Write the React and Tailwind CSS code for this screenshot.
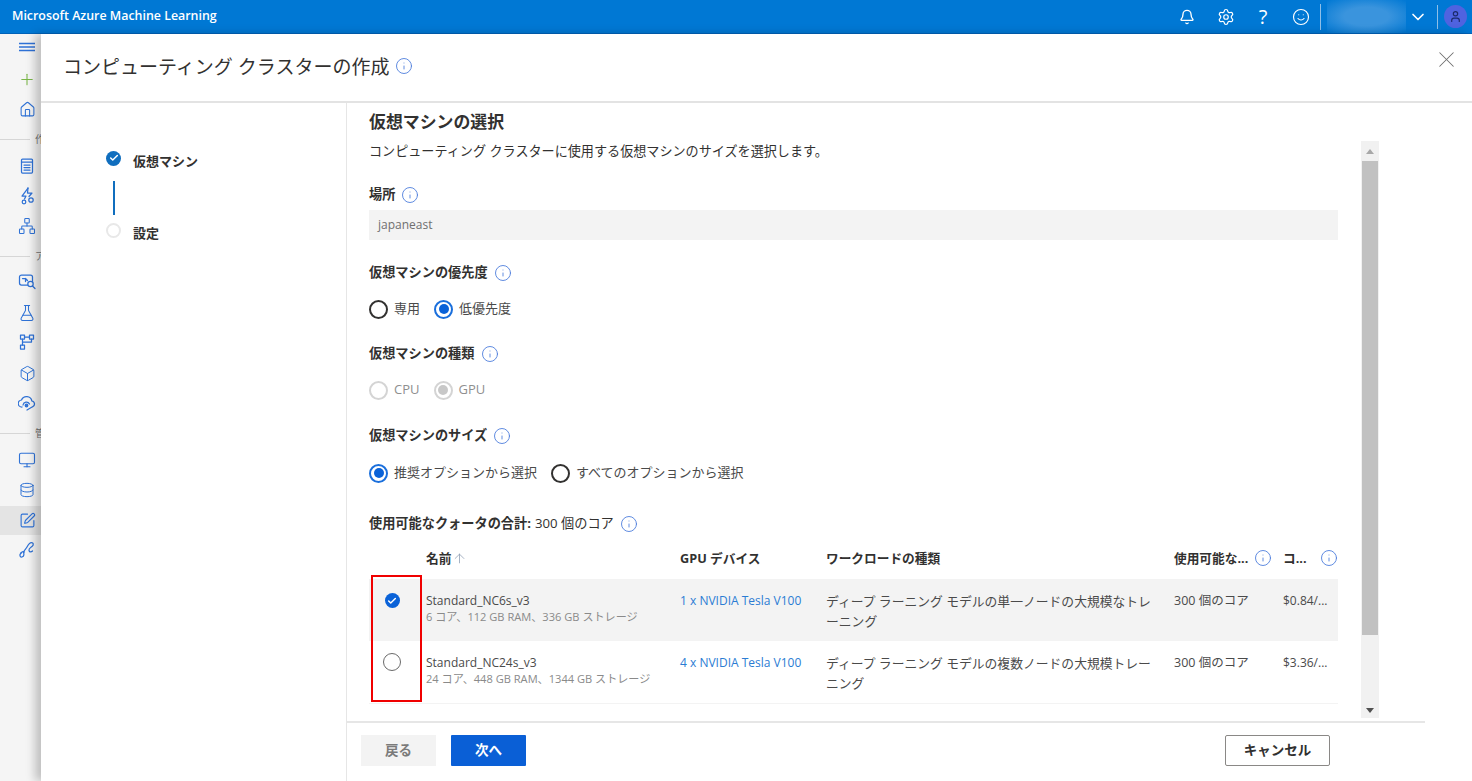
import React from "react";
import { Bell, Settings, Smile, ChevronDown, User, Home, Info, Check, X, Network, FlaskConical, Box, Monitor, Database, SquarePen, ArrowUp, Plus } from "lucide-react";

const FONT = "font-['Open_Sans','Noto_Sans_CJK_JP',sans-serif]";
const BLUE = "text-[#2f72d6]";

const Ico = ({ children }) => (
  <svg width="18" height="18" viewBox="0 0 18 18" fill="none" stroke="#2f72d6" strokeWidth="1.25" strokeLinecap="round" strokeLinejoin="round">
    {children}
  </svg>
);

const Burger = () => (
  <svg width="18" height="18" viewBox="0 0 18 18" stroke="#2f72d6" strokeWidth="1.3">
    <path d="M1 5.500h16M1 9h16M1 12.500h16" />
  </svg>
);
const Notebook = () => (
  <Ico>
    <rect x="3.500" y="2" width="11" height="14" rx="1" />
    <path d="M3.500 5h11M6 8h6M6 10.500h6M6 13h6" />
  </Ico>
);
const AutoMl = () => (
  <Ico>
    <path d="M10 1 4 9h4l-1.500 3" />
    <path d="M10 1 9.500 6H14l-3 3.500" />
    <circle cx="6" cy="15" r="1.800" />
    <circle cx="13" cy="13" r="2.200" />
  </Ico>
);
const Experiments = () => (
  <Ico>
    <rect x="1.500" y="2" width="13" height="10" rx="2" />
    <path d="M4.500 5.500h3v3M7.500 5.500l2 2" />
    <circle cx="12.500" cy="11" r="2.700" fill="#f5f5f5" />
    <path d="m14.500 13 2.500 2.500" />
  </Ico>
);
const Pipeline = () => (
  <Ico>
    <rect x="2.500" y="2" width="4" height="4" />
    <rect x="11.500" y="2" width="4" height="4" />
    <rect x="2.500" y="12" width="4" height="4" />
    <path d="M6.500 4h5M4.500 6v6M13.500 6v3H4.500" />
  </Ico>
);
const Endpoint = () => (
  <Ico>
    <path d="M4 13a3.500 3.500 0 0 1-.5-7 5.500 5.500 0 0 1 10.400 1 3 3 0 0 1 .6 5.800L9 16" />
    <path d="M5 11a3.500 3.500 0 0 1 6.500-1" />
    <circle cx="8.500" cy="11.500" r="1.300" fill="#2f72d6" />
  </Ico>
);
const Linked = () => (
  <Ico>
    <path d="M3 12c-2 2-1 4.500 1 4 2.500-.6 2-3.500 1.500-4.500S8 8 9 6s2.500-4.500 4.500-4.500S16 4 14 5.500s-3.500 2-3 4 2.500 1.500 3.500.5" />
    <path d="M3 12c1-1 2.500-1.500 3.500-1" />
  </Ico>
);

const Nav = ({ children, h = 30, active }) => (
  <div className={`flex items-center pl-[18px] ${active ? "bg-[#e4e4e4]" : ""}`} style={{ height: h }}>
    <div className="flex w-[18px] shrink-0 justify-center">{children}</div>
  </div>
);
const Sep = ({ label }) => (
  <div className="flex h-[26px] items-center gap-[5px] overflow-hidden">
    <div className="h-px w-[30px] shrink-0 bg-[#d6d6d6]" />
    <span className="whitespace-nowrap text-[10px] text-[#777]">{label}</span>
  </div>
);

const InfoI = ({ className = "" }) => (
  <Info size={18} strokeWidth={1.2} className={`shrink-0 text-[#4f7fdc] ${className}`} />
);

const Label = ({ children }) => (
  <div className="flex h-5 items-center text-[13.200px] font-bold text-[#323130]">
    {children}
    <InfoI className="ml-[6px]" />
  </div>
);

const Radio = ({ on, disabled, label }) => (
  <div className="flex items-center gap-[6px]">
    <span
      className={`flex h-[19px] w-[19px] items-center justify-center rounded-full border-2 ${
        disabled ? "border-[#d4d4d4]" : on ? "border-[#1a6fdc]" : "border-[#323130]"
      }`}
    >
      {on && <span className={`h-[10px] w-[10px] rounded-full ${disabled ? "bg-[#c8c8c8]" : "bg-[#0a62d8]"}`} />}
    </span>
    <span className={`text-[13px] ${disabled ? "text-[#8f8f8f]" : "text-[#4a4a4a]"}`}>{label}</span>
  </div>
);

const Cols = "grid grid-cols-[57px_254px_146px_348px_109px_55px]";

const Row = ({ sel, name, spec, gpu, work, price }) => (
  <div className={`${Cols} h-[62px] text-[12px] leading-[20px] text-[#4a4a4a] ${sel ? "bg-[#f3f3f3]" : ""}`}>
    <div className="flex justify-center pr-[11px] pt-[14px]">
      {sel ? (
        <span className="flex h-[15px] w-[15px] items-center justify-center rounded-full bg-[#0a62d8]">
          <Check size={10} strokeWidth={3.500} className="text-white" />
        </span>
      ) : (
        <span className="-mt-[2px] h-[18px] w-[18px] rounded-full border-[1.500px] border-[#6a6a6a]" />
      )}
    </div>
    <div className="pt-[12px]">
      <div>{name}</div>
      <div className="-mt-[4px] text-[11.100px] text-[#8a8a8a]">{spec}</div>
    </div>
    <div className="pt-[12px] text-[#2b7cd3]">{gpu}</div>
    <div className="pr-[18px] pt-[12px] text-[12.800px]">{work}</div>
    <div className="pt-[12px] text-[12.500px]">300 個のコア</div>
    <div className="pt-[12px]">{price}</div>
  </div>
);

export default function App() {
  return (
    <div className={`${FONT} flex h-[781px] w-[1472px] flex-col overflow-hidden bg-white`}>
      <header className="flex h-[34px] shrink-0 items-center border-b border-[#0062b8] bg-[#0078d4] text-white">
        <div className="ml-3 text-[12.400px] font-semibold">Microsoft Azure Machine Learning</div>
        <div className="ml-auto flex h-full items-center">
          <Bell size={16} strokeWidth={2} className="mr-[22px]" />
          <Settings size={18} strokeWidth={1.6} className="mr-[22px]" />
          <span className="mr-[23px] w-[12px] text-center text-[20px] leading-none">?</span>
          <Smile size={18} strokeWidth={1.5} className="mr-[10px]" />
          <div className="h-[26px] w-px bg-[#8fbfe8]" />
          <div className="ml-[6px] h-full w-[79px] bg-[radial-gradient(ellipse_at_center,#3a94dd_40%,#0078d4_100%)]" />
          <ChevronDown size={20} strokeWidth={2} className="ml-[2px] mr-[9px]" />
          <div className="h-[24px] w-px bg-[#8fbfe8]" />
          <div className="ml-[6px] mr-[5px] flex h-[23px] w-[23px] items-center justify-center rounded-full bg-[#4f63e0] text-[#1b2a6b]">
            <User size={13} strokeWidth={2.200} />
          </div>
        </div>
      </header>

      <div className="flex min-h-0 flex-1">
        <nav className="w-[41px] shrink-0 bg-[#f5f5f5] pt-[3px]">
          <Nav h={20}><Burger /></Nav>
          <Nav h={44}><Plus size={27} strokeWidth={1.400} className="text-[#7ab648]" /></Nav>
          <Nav h={17}><Home size={17} strokeWidth={1.500} className={BLUE} /></Nav>
          <div className="h-[8px]" />
          <Sep label="作成者" />
          <Nav h={28}><Notebook /></Nav>
          <Nav h={32}><AutoMl /></Nav>
          <Nav h={28}><Network size={18} strokeWidth={1.400} className={BLUE} /></Nav>
          <div className="h-[3px]" />
          <Sep label="アセット" />
          <Nav h={26}><Experiments /></Nav>
          <Nav h={36}><FlaskConical size={18} strokeWidth={1.400} className={BLUE} /></Nav>
          <Nav h={22}><Pipeline /></Nav>
          <Nav h={40}><Box size={17} strokeWidth={1.400} className={BLUE} /></Nav>
          <Nav h={20}><Endpoint /></Nav>
          <div className="h-[7px]" />
          <Sep label="管理" />
          <Nav h={28}><Monitor size={18} strokeWidth={1.500} className={BLUE} /></Nav>
          <Nav h={32}><Database size={16} strokeWidth={1.500} className={BLUE} /></Nav>
          <Nav h={29} active><SquarePen size={17} strokeWidth={1.600} className={BLUE} /></Nav>
          <Nav h={30}><Linked /></Nav>
        </nav>

        <main className="relative flex min-w-0 flex-1 flex-col bg-white shadow-[-6px_0_9px_rgba(0,0,0,0.22)]">
          <div className="flex h-[69px] shrink-0 items-start border-b-2 border-[#e3e3e3] pl-[22px]">
            <h1 className="mt-[19px] text-[19px] font-normal leading-[28px] text-[#323130]">コンピューティング クラスターの作成</h1>
            <InfoI className="ml-[6px] mt-[23px]" />
            <X size={27} strokeWidth={0.9} className="ml-auto mr-[12px] mt-[12px] text-[#6f6f6f]" />
          </div>

          <div className="flex min-h-0 flex-1">
            <aside className="w-[306px] shrink-0 border-r border-[#e6e6e6] pl-[65px] pt-[45px]">
              <div className="flex h-[20px] items-center">
                <span className="flex h-[15px] w-[15px] items-center justify-center rounded-full bg-[#106ebe]">
                  <Check size={10} strokeWidth={3.500} className="text-white" />
                </span>
                <span className="ml-[12px] mt-[8px] text-[13px] font-bold text-[#323130]">仮想マシン</span>
              </div>
              <div className="ml-[6.500px] mt-[13px] h-[34px] w-[2px] bg-[#106ebe]" />
              <div className="mt-[5px] flex h-[20px] items-center">
                <span className="h-[15px] w-[15px] rounded-full border-2 border-[#e8e8e8]" />
                <span className="ml-[12px] mt-[7px] text-[13px] font-bold text-[#323130]">設定</span>
              </div>
            </aside>

            <div className="flex min-w-0 flex-1 flex-col">
              <div className="flex min-h-0 flex-1">
                <div className="relative w-[991px] shrink-0 pl-[22px] pt-[7px]">
                  <h2 className="h-[24px] text-[16.900px] font-bold leading-[24px] text-[#323130]">仮想マシンの選択</h2>
                  <p className="mt-[7px] h-[20px] text-[13.100px] leading-[20px] text-[#323130]">コンピューティング クラスターに使用する仮想マシンのサイズを選択します。</p>

                  <div className="mt-[24px]"><Label>場所</Label></div>
                  <div className="mt-[5px] flex h-[30px] w-[969px] items-center bg-[#f3f3f3] pl-[9px] text-[12px] text-[#6f6f6f]">japaneast</div>

                  <div className="mt-[23px]"><Label>仮想マシンの優先度</Label></div>
                  <div className="mt-[16px] flex h-[20px] items-center gap-[14px]">
                    <Radio label="専用" />
                    <Radio on label="低優先度" />
                  </div>

                  <div className="mt-[25px]"><Label>仮想マシンの種類</Label></div>
                  <div className="mt-[16px] flex h-[20px] items-center gap-[14px]">
                    <Radio disabled label="CPU" />
                    <Radio disabled on label="GPU" />
                  </div>

                  <div className="mt-[26px]"><Label>仮想マシンのサイズ</Label></div>
                  <div className="mt-[17px] flex h-[20px] items-center gap-[14px]">
                    <Radio on label="推奨オプションから選択" />
                    <Radio label="すべてのオプションから選択" />
                  </div>

                  <div className="mt-[31px] flex h-[20px] items-center text-[13.200px] text-[#323130]">
                    <span className="font-bold">使用可能なクォータの合計:</span>
                    <span className="ml-1">300 個のコア</span>
                    <InfoI className="ml-[6px]" />
                  </div>

                  <div className="mt-[8px] w-[969px]">
                    <div className={`${Cols} h-[37px] items-center pb-[4px] text-[12.700px] font-bold text-[#323130]`}>
                      <div />
                      <div className="flex items-center">名前<ArrowUp size={15} strokeWidth={1.200} className="ml-[1px] text-[#8a9ab0]" /></div>
                      <div>GPU デバイス</div>
                      <div>ワークロードの種類</div>
                      <div className="flex items-center">使用可能な...<InfoI className="ml-[6px]" /></div>
                      <div className="flex items-center justify-between">コ...<InfoI /></div>
                    </div>
                    <Row sel name="Standard_NC6s_v3" spec="6 コア、112 GB RAM、336 GB ストレージ" gpu="1 x NVIDIA Tesla V100" work="ディープ ラーニング モデルの単一ノードの大規模なトレーニング" price="$0.84/..." />
                    <div className="border-b border-[#f3f3f3]">
                      <Row name="Standard_NC24s_v3" spec="24 コア、448 GB RAM、1344 GB ストレージ" gpu="4 x NVIDIA Tesla V100" work="ディープ ラーニング モデルの複数ノードの大規模トレーニング" price="$3.36/..." />
                    </div>
                  </div>

                  <div className="absolute left-[24px] top-[472px] h-[127px] w-[51px] border-[2.500px] border-[#f00000]" />
                </div>

                <div className="mb-[3px] ml-[23px] mt-[38px] flex w-[18px] shrink-0 flex-col items-center bg-[#f1f1f1]">
                  <span className="mt-2 h-0 w-0 border-x-[4px] border-b-[5px] border-x-transparent border-b-[#a8a8a8]" />
                  <div className="mt-[7px] h-[474px] w-[16px] bg-[#c1c1c1]" />
                  <span className="mb-[5px] mt-auto h-0 w-0 border-x-[4px] border-t-[5px] border-x-transparent border-t-[#505050]" />
                </div>
              </div>

              <footer className="mr-[47px] flex h-[60px] shrink-0 items-start border-t-2 border-[#e6e6e6] pl-[14px] pt-[12px]">
                <button className="h-[31px] w-[75px] bg-[#f3f3f3] text-[13.500px] font-semibold text-[#7a7a7a]">戻る</button>
                <button className="ml-[15px] h-[31px] w-[75px] rounded-[1px] bg-[#0a5fd6] text-[13.500px] font-bold text-white">次へ</button>
                <button className="ml-auto mr-[95px] h-[31px] w-[105px] rounded-[2px] border border-[#8a8886] bg-white text-[13.500px] font-bold text-[#323130]">キャンセル</button>
              </footer>
            </div>
          </div>
        </main>
      </div>
    </div>
  );
}
